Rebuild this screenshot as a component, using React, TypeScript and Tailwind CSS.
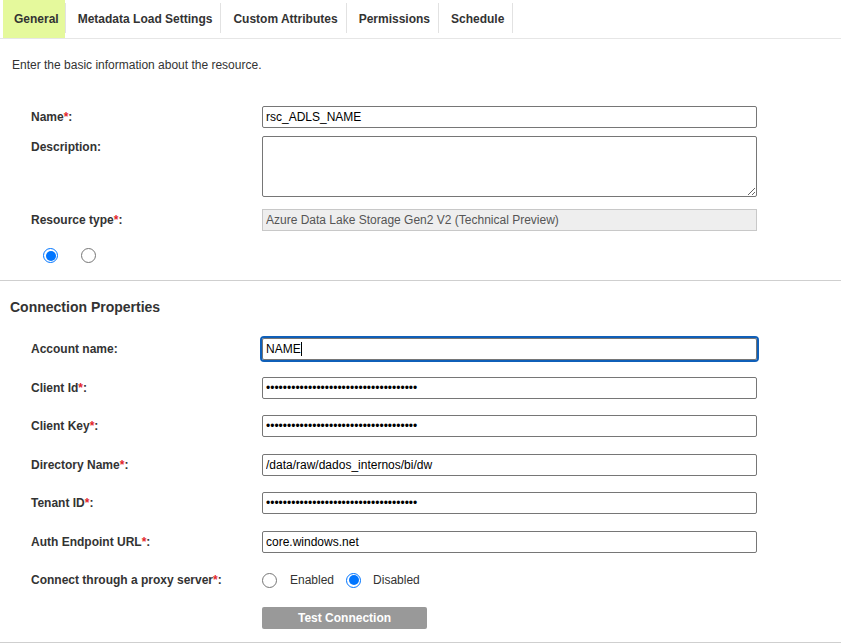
import React from "react";

const tabs = [
  "General",
  "Metadata Load Settings",
  "Custom Attributes",
  "Permissions",
  "Schedule",
];

const DOTS = "••••••••••••••••••••••••••••••••••••";

const inputCls =
  "h-[22px] w-[495px] rounded-[2px] border border-[#767676] bg-white px-[3px] text-[12px] text-black outline-none";

function Label({ text, required }: { text: string; required?: boolean }) {
  return (
    <div className="w-[231px] shrink-0 pt-[4px] font-bold leading-[14px] text-[#333]">
      {text}
      {required && <span className="text-[#e3262b]">*</span>}:
    </div>
  );
}

function Radio({ checked }: { checked?: boolean }) {
  if (checked) {
    return (
      <span className="flex h-[15px] w-[15px] shrink-0 rounded-full border-[1.5px] border-[#0075ff] bg-white p-[1.5px]">
        <span className="h-full w-full rounded-full bg-[#0075ff]" />
      </span>
    );
  }
  return (
    <span className="block h-[15px] w-[15px] shrink-0 rounded-full border border-[#767676] bg-white" />
  );
}

type Row = {
  label: string;
  required?: boolean;
  value: string;
  password?: boolean;
  mt: string;
};

const connectionRows: Row[] = [
  { label: "Client Id", required: true, value: DOTS, password: true, mt: "mt-[17px]" },
  { label: "Client Key", required: true, value: DOTS, password: true, mt: "mt-[16px]" },
  { label: "Directory Name", required: true, value: "/data/raw/dados_internos/bi/dw", mt: "mt-[17px]" },
  { label: "Tenant ID", required: true, value: DOTS, password: true, mt: "mt-[16px]" },
  { label: "Auth Endpoint URL", required: true, value: "core.windows.net", mt: "mt-[17px]" },
];

export default function App() {
  return (
    <div className="min-h-screen w-full bg-white font-['Liberation_Sans',Arial,sans-serif] text-[12px] text-[#333]">
      {/* tab bar */}
      <div className="flex h-[39px] border-b border-[#e6e6e6] pl-[3px]">
        {tabs.map((tab, i) => (
          <React.Fragment key={tab}>
            <div
              className={
                i === 0
                  ? "flex h-full items-center bg-[#e5f99c] pl-[11px] pr-[6px] pb-[1px] font-bold text-[#333]"
                  : "flex h-full items-center pl-[12px] pr-[8px] pb-[1px] font-bold text-[#333]"
              }
            >
              {tab}
            </div>
            <div className="mt-[3px] h-[30px] w-px bg-[#e2e2e2]" />
          </React.Fragment>
        ))}
      </div>

      <p className="mt-[19px] pl-[12px] leading-[14px] text-[#333]">
        Enter the basic information about the resource.
      </p>

      {/* general fields */}
      <div className="mt-[34px] flex flex-col pl-[31px]">
        <div className="flex items-start">
          <Label text="Name" required />
          <input className={inputCls} value="rsc_ADLS_NAME" readOnly />
        </div>
        <div className="mt-[8px] flex items-start">
          <Label text="Description" />
          <textarea
            className="h-[61px] w-[495px] rounded-[2px] border border-[#767676] bg-white px-[3px] text-[12px] text-black outline-none"
            readOnly
          />
        </div>
        <div className="mt-[12px] flex items-start">
          <Label text="Resource type" required />
          <input
            className="h-[22px] w-[495px] border border-[#c8c8c8] bg-[#eeeeee] px-[3px] text-[12px] text-[#555] outline-none"
            value="Azure Data Lake Storage Gen2 V2 (Technical Preview)"
            readOnly
          />
        </div>
      </div>

      <div className="mt-[17px] flex items-center gap-[23px] pl-[43px]">
        <Radio checked />
        <Radio />
      </div>

      <div className="mt-[17px] h-px bg-[#cfcfcf]" />

      <h2 className="mt-[18px] pl-[10px] text-[14px] font-bold leading-[16px] text-[#333]">
        Connection Properties
      </h2>

      {/* connection fields */}
      <div className="mt-[23px] flex flex-col pl-[31px]">
        <div className="flex items-start">
          <Label text="Account name" />
          <div className="flex h-[22px] w-[495px] items-center rounded-[2px] border border-[#767676] bg-white px-[3px] text-black outline-2 outline-[#0f5fb8]">
            <span>NAME</span>
            <span className="h-[14px] w-px bg-black" />
          </div>
        </div>

        {connectionRows.map((row) => (
          <div key={row.label} className={`${row.mt} flex items-start`}>
            <Label text={row.label} required={row.required} />
            <input
              className={inputCls}
              type={row.password ? "password" : "text"}
              value={row.value}
              readOnly
            />
          </div>
        ))}

        <div className="mt-[19px] flex h-[16px] items-center">
          <div className="w-[231px] shrink-0 font-bold leading-[14px] text-[#333]">
            Connect through a proxy server<span className="text-[#e3262b]">*</span>:
          </div>
          <Radio />
          <span className="ml-[13px] text-[#333]">Enabled</span>
          <span className="ml-[12px]">
            <Radio checked />
          </span>
          <span className="ml-[12px] text-[#333]">Disabled</span>
        </div>

        <div className="mt-[19px] flex">
          <div className="w-[231px] shrink-0" />
          <button className="h-[22px] w-[165px] rounded-[2px] bg-[#999999] text-[12px] font-bold text-white">
            Test Connection
          </button>
        </div>
      </div>

      <div className="mt-[13px] h-px bg-[#cfcfcf]" />
    </div>
  );
}
